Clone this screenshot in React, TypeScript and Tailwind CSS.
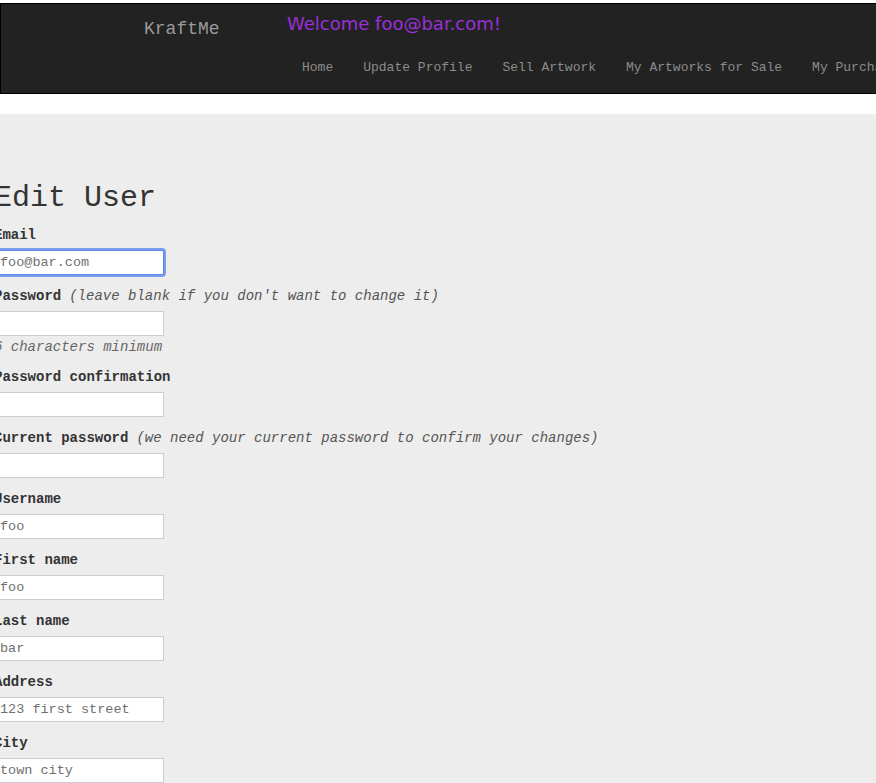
import React from "react";

const mono = { fontFamily: '"Liberation Mono", "Courier New", monospace' };

type Field = { label: string; value: string; note?: string; hint?: string; focused?: boolean };

const fields: Field[] = [
  { label: "Email", value: "foo@bar.com", focused: true },
  { label: "Password", value: "", note: "(leave blank if you don't want to change it)", hint: "6 characters minimum" },
  { label: "Password confirmation", value: "" },
  { label: "Current password", value: "", note: "(we need your current password to confirm your changes)" },
  { label: "Username", value: "foo" },
  { label: "First name", value: "foo" },
  { label: "Last name", value: "bar" },
  { label: "Address", value: "123 first street" },
  { label: "City", value: "town city" },
];

export default function App() {
  return (
    <div className="min-h-[783px] w-[876px] overflow-hidden bg-white" style={mono}>
      <header className="mt-[3px] h-[91px] w-[900px] border border-black bg-[#222222]">
        <div className="flex">
          <div className="w-[286px] shrink-0 pl-[143px] pt-[15px] text-[18px] leading-[20px] text-[#9a9a9a]">KraftMe</div>
          <div className="shrink-0">
            <div className="pt-[10px] font-['DejaVu_Sans',Verdana,sans-serif] text-[18px] leading-[20px] text-[#9b2fd8]">
              Welcome foo@bar.com!
            </div>
            <nav className="flex gap-[30px] whitespace-nowrap pl-[15px] pt-[26px] text-[13px] leading-[16px] text-[#8c8c8c]">
              <span>Home</span>
              <span>Update Profile</span>
              <span>Sell Artwork</span>
              <span>My Artworks for Sale</span>
              <span>My Purchases</span>
            </nav>
          </div>
        </div>
      </header>

      <main className="mt-[20px] min-h-[669px] bg-[#ededed] pt-[67px] text-[#333333]">
        <div className="ml-[-6px]">
          <h1 className="mb-[12px] text-[30px] leading-[34px] font-normal text-[#333333]">Edit User</h1>
          {fields.map((f) => (
            <div key={f.label} className={f.hint ? "mb-[14px]" : "mb-[13px]"}>
              <div className="whitespace-nowrap text-[14px] leading-[16px]">
                <span className="font-bold">{f.label}</span>
                {f.note && <span className="ml-[8px] italic text-[#555555]">{f.note}</span>}
              </div>
              <input
                readOnly
                value={f.value}
                className={
                  "mt-[7px] block h-[25px] w-[170px] border bg-white px-[5px] text-[13.5px] text-[#6f6f6f] outline-none " +
                  (f.focused
                    ? "rounded-[2px] border-[#5b86e5] ring-2 ring-[#7a9cf0]"
                    : "border-[#cccccc]")
                }
                style={mono}
              />
              {f.hint && (
                <div className="mt-[3px] text-[14px] leading-[16px] italic text-[#666666]">{f.hint}</div>
              )}
            </div>
          ))}
        </div>
      </main>
    </div>
  );
}
